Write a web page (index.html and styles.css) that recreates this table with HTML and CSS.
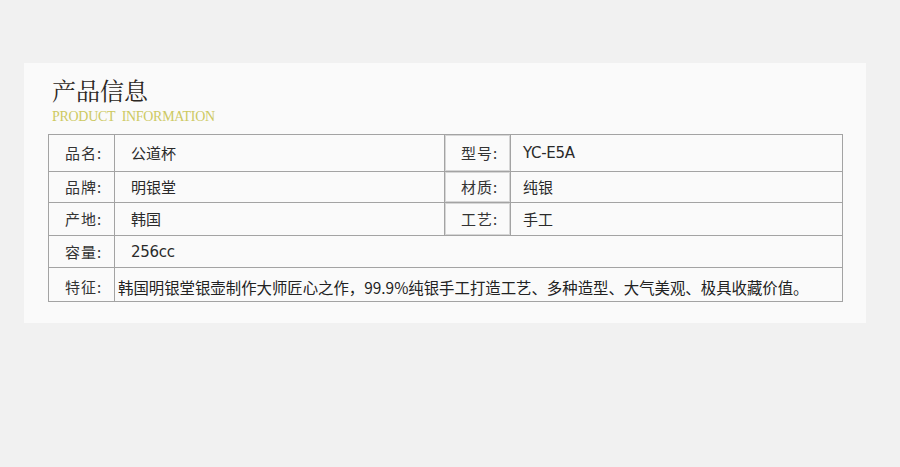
FILE: index.html
```html
<!DOCTYPE html>
<html lang="zh-CN">
<head>
<meta charset="utf-8">
<title>产品信息</title>
<link rel="stylesheet" href="styles.css">
</head>
<body>
<div class="page">
  <section class="card">
    <header class="heading">
      <h1 class="title">产品信息</h1>
      <p class="subtitle">PRODUCT&nbsp; INFORMATION</p>
    </header>
    <table class="info">
      <colgroup>
        <col class="c-label">
        <col class="c-value">
        <col class="c-label">
        <col class="c-value2">
      </colgroup>
      <tr class="r1">
        <td class="label">品名:</td>
        <td class="value">公道杯</td>
        <td class="label label-r">型号:</td>
        <td class="value latin">YC-E5A</td>
      </tr>
      <tr class="r2">
        <td class="label">品牌:</td>
        <td class="value">明银堂</td>
        <td class="label label-r">材质:</td>
        <td class="value value-r">纯银</td>
      </tr>
      <tr class="r3">
        <td class="label">产地:</td>
        <td class="value">韩国</td>
        <td class="label label-r">工艺:</td>
        <td class="value value-r">手工</td>
      </tr>
      <tr class="r4">
        <td class="label">容量:</td>
        <td class="value latin" colspan="3">256cc</td>
      </tr>
      <tr class="r5">
        <td class="label">特征:</td>
        <td class="value value-long" colspan="3">韩国明银堂银壶制作大师匠心之作，99.9%纯银手工打造工艺、多种造型、大气美观、极具收藏价值。</td>
      </tr>
    </table>
  </section>
</div>
</body>
</html>
```

FILE: styles.css
```css
html, body {
  margin: 0;
  padding: 0;
  background: #f1f1f1;
}

.page {
  padding: 63px 0 0 24px;
}

.card {
  width: 842px;
  height: 260px;
  box-sizing: border-box;
  background: #fafafa;
  padding: 12px 0 0 24px;
}

.heading {
  padding-left: 4px;
}

.title {
  margin: 0;
  font-family: "Noto Serif CJK SC", "AR PL UMing CN", "Noto Sans CJK SC", serif;
  font-weight: normal;
  font-size: 24px;
  line-height: 30px;
  color: #2b2622;
}

.subtitle {
  margin: 2px 0 0;
  font-family: "Liberation Serif", serif;
  font-size: 14px;
  line-height: 19px;
  color: #cdc962;
  letter-spacing: -0.3px;
}

.info {
  margin-top: 8px;
  width: 794px;
  border-collapse: collapse;
  table-layout: fixed;
  font-family: "Noto Sans CJK SC", sans-serif;
  font-size: 15px;
  color: #333;
}

.c-label { width: 66px; }
.c-value { width: 330px; }
.c-value2 { width: 332px; }

.info td {
  border: 1px solid #a3a3a3;
  padding: 0;
  vertical-align: middle;
  line-height: 20px;
  white-space: nowrap;
}

.r1 { height: 37px; }
.r2 { height: 31px; }
.r3 { height: 33px; }
.r4 { height: 32px; }
.r5 { height: 34px; }

.label {
  padding-left: 16px !important;
  letter-spacing: 1px;
  color: #333;
}

.label-r {
  box-shadow: inset 1px 1px 0 #d6d6d6, inset -1px -1px 0 #d6d6d6;
}

.value {
  padding-left: 16px !important;
  color: #2a2a2a;
}

.value-r,
.r1 .latin {
  padding-left: 12px !important;
}

.latin {
  font-family: "DejaVu Sans", "Noto Sans CJK SC", sans-serif;
  font-size: 15px;
  letter-spacing: -0.3px;
}

.r5 td {
  padding-top: 4px !important;
}

.value-long {
  padding-left: 3px !important;
  font-size: 15.4px;
  color: #222;
}
```
